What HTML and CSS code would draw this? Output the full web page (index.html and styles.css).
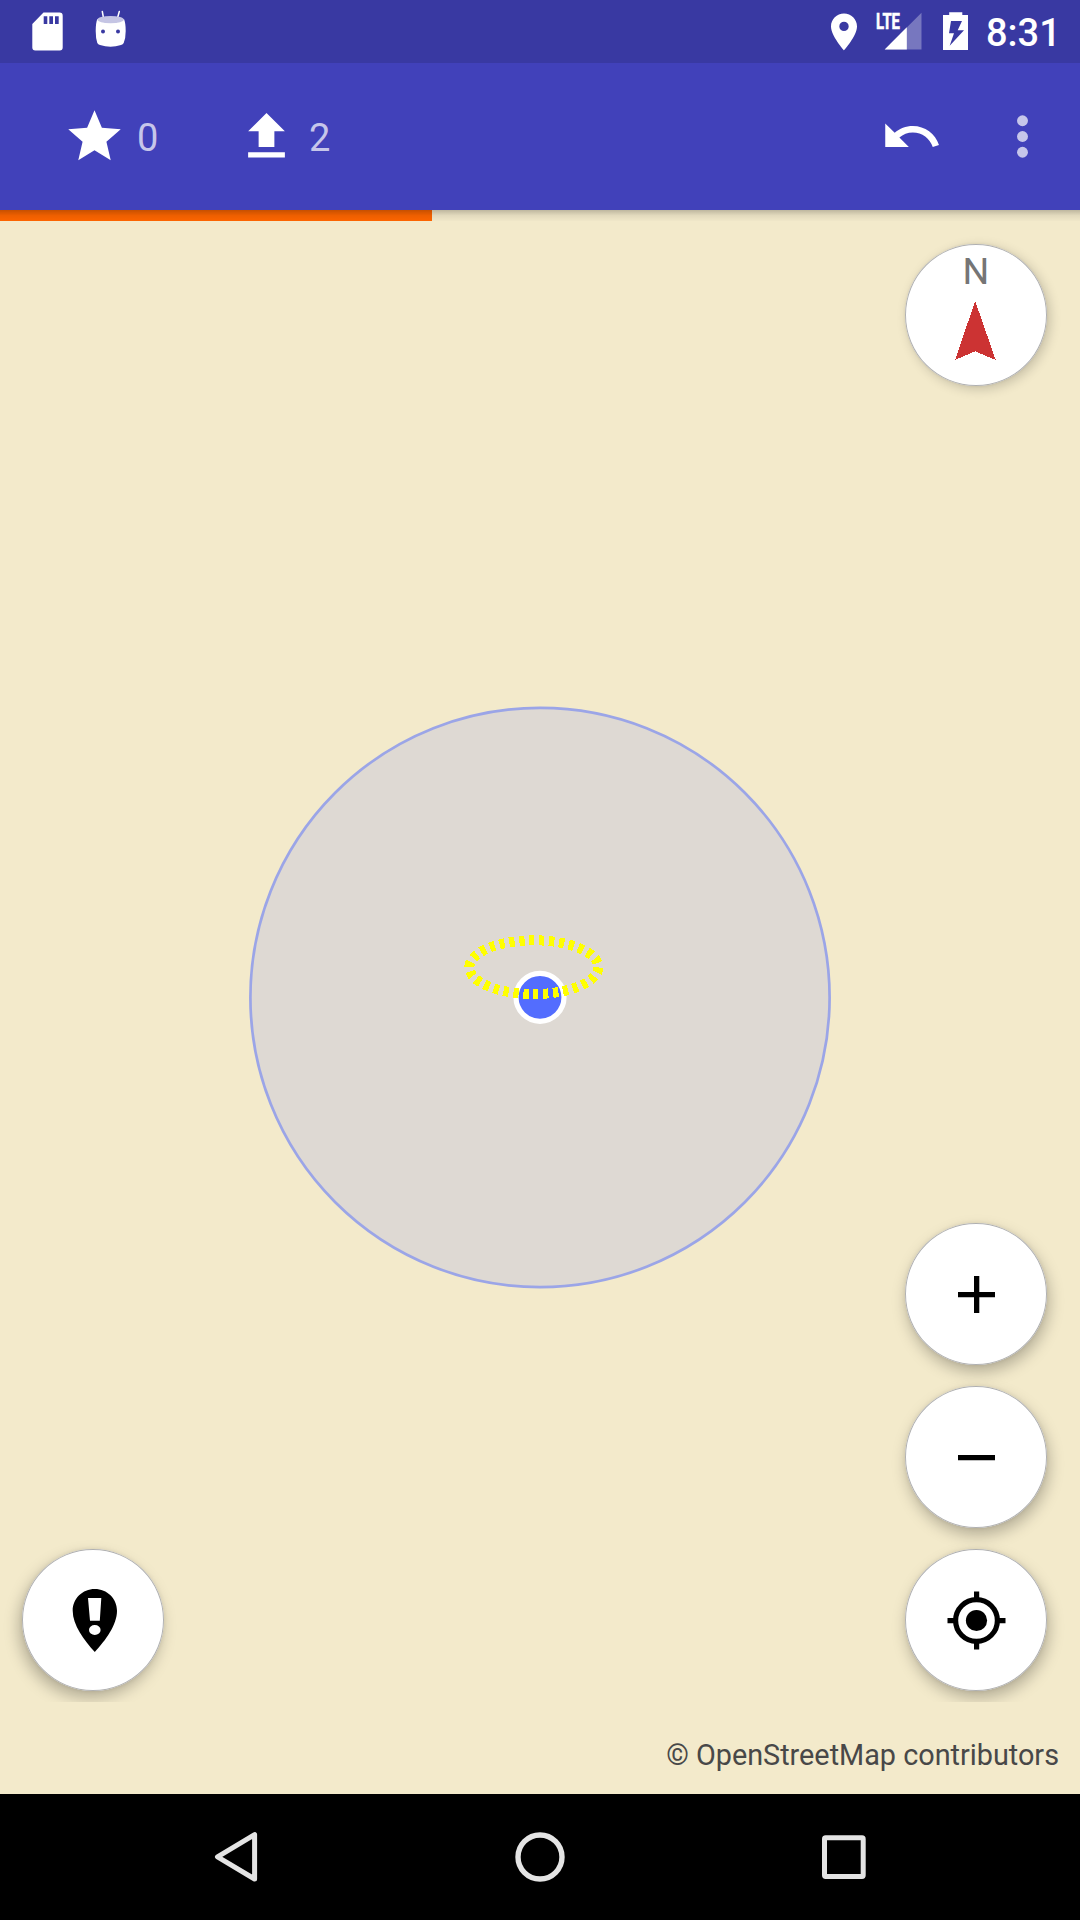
FILE: index.html
```html
<!DOCTYPE html>
<html lang="en">
<head>
<meta charset="utf-8">
<title>Map</title>
<link rel="stylesheet" href="styles.css">
</head>
<body>
<div class="screen">
  <header class="status-bar">
    <svg class="status-icon" width="32" height="63" viewBox="32 0 32 63">
      <path fill="#fff" fill-rule="evenodd" d="M43.500 12.500H59.500Q62.700 12.500 62.700 15.700V47.500Q62.700 50.500 59.700 50.500H35.300Q32.300 50.500 32.300 47.500V24ZM43.700 16.200V24H47.300V16.200ZM49.300 16.200V24H53V16.200ZM55 16.200V24H58.700V16.200Z"/>
    </svg>
    <svg class="status-icon debug-icon" width="32" height="63" viewBox="95 0 32 63">
      <path stroke="#fff" stroke-width="1.500" stroke-linecap="round" d="M102.300 11.500L103.500 18M119.300 11.500L117.500 18"/>
      <path fill="#fff" d="M97.300 19Q95.700 23 95.700 31Q95.700 38 97.300 43Q98 44.500 100 45Q110.500 48.300 121 45Q123 44.500 123.700 43Q125.700 38 125.700 31Q125.700 23 124 19Q110.500 27 97.300 19Z"/>
      <ellipse cx="110.600" cy="19.600" rx="13.300" ry="3.700" fill="#c5c5e4"/>
      <circle cx="103" cy="31.500" r="2" fill="#3939a2"/>
      <circle cx="118" cy="31.500" r="2" fill="#3939a2"/>
    </svg>
    <span class="spacer"></span>
    <svg class="status-icon" width="28" height="63" viewBox="830 0 28 63">
      <path fill="#fff" fill-rule="evenodd" d="M844 13.500C836.800 13.500 831 19.300 831 26.500C831 36 844 50.300 844 50.300S857 36 857 26.500C857 19.300 851.200 13.500 844 13.500ZM844 21.700A4.700 4.700 0 1 1 844 31.100A4.700 4.700 0 1 1 844 21.700Z"/>
    </svg>
    <svg class="status-icon signal-icon" width="48" height="63" viewBox="875 0 48 63">
      <path fill="#7777bf" d="M921.500 12.700V49.500H884.700Z"/>
      <path fill="#fff" d="M906.800 27.300V49.500H884.700Z"/>
      <text class="network-type" x="876" y="29.300" textLength="24" lengthAdjust="spacingAndGlyphs">LTE</text>
    </svg>
    <svg class="status-icon battery-icon" width="26" height="63" viewBox="943 0 26 63">
      <path fill="#fff" fill-rule="evenodd" d="M949.200 12.200H962.300V15H968V50H943V15H949.200ZM951 21L949 33.300H954L949.700 45.700L964 30.200H957.700L962 21Z"/>
    </svg>
    <span class="clock">8:31</span>
  </header>

  <div class="app-bar">
    <svg class="bar-icon" viewBox="0 0 24 24"><path fill="#fff" d="M12 17.270L18.180 21l-1.640-7.030L22 9.240l-7.190-.61L12 2 9.190 8.630 2 9.240l5.460 4.730L5.820 21z"/></svg>
    <span class="counter">0</span>
    <svg class="bar-icon upload-icon" viewBox="0 0 24 24"><path fill="#fff" d="M9 16h6v-6h4l-7-7-7 7h4zM5 18h14v2H5z"/></svg>
    <span class="counter">2</span>
    <span class="spacer"></span>
    <svg class="bar-icon undo-icon" viewBox="0 0 24 24"><path fill="#fff" d="M12.500 8c-2.650 0-5.050.99-6.900 2.600L2 7v9h9l-3.620-3.620c1.390-1.160 3.160-1.880 5.120-1.880 3.540 0 6.550 2.310 7.600 5.500l2.370-.78C21.080 11.030 17.150 8 12.500 8z"/></svg>
    <svg class="bar-icon more-icon" viewBox="0 0 24 24"><g fill="#c6c6ea"><circle cx="12" cy="6" r="2.080"/><circle cx="12" cy="12" r="2.080"/><circle cx="12" cy="18" r="2.080"/></g></svg>
  </div>

  <main class="map">
    <div class="progress"><div class="progress-value" style="width: 40%"></div></div>
    <svg class="map-canvas" width="1080" height="1584" viewBox="0 210 1080 1584">
      <circle cx="540" cy="997.500" r="289.600" fill="#ded9d3" stroke="#9ba5e7" stroke-width="2.700"/>
      <circle cx="540" cy="997.300" r="24" fill="#536dfe" stroke="#fff" stroke-width="5.200"/>
      <ellipse cx="533.800" cy="967.200" rx="64.500" ry="26.900" pathLength="300" fill="none" stroke="#ff0" stroke-width="10" stroke-dasharray="5.300 4.700" stroke-dashoffset="-0.300" shape-rendering="crispEdges"/>
    </svg>
    <div class="controls">
      <div class="round-button compass">
        <span class="north">N</span>
        <svg class="needle" width="42" height="60" viewBox="955 301 42 60"><path fill="#c33" shape-rendering="crispEdges" d="M975.200 301L995.700 360L975.200 351.300L955 360Z"/></svg>
      </div>
      <div class="lower">
        <div class="round-button create">
          <svg width="142" height="142" viewBox="22 1549 142 142"><path fill-rule="evenodd" d="M94.800 1589C82.500 1589 72.700 1598.500 72.700 1610.800C72.700 1625 84 1640.500 94.800 1651.900C105.600 1640.500 117 1625 117 1610.800C117 1598.500 107.100 1589 94.800 1589ZM88 1598H101.300L99.800 1620.700H90ZM94.800 1625A5.800 5 0 1 1 94.800 1635A5.800 5 0 1 1 94.800 1625Z"/></svg>
        </div>
        <div class="zoom-stack">
          <div class="round-button"><svg width="142" height="142" viewBox="905 1223 142 142"><path d="M958 1292H974V1276H979.300V1292H995V1297.300H979.300V1313H974V1297.300H958Z"/></svg></div>
          <div class="round-button"><svg width="142" height="142" viewBox="905 1386 142 142"><path d="M958 1455H995V1460.300H958Z"/></svg></div>
          <div class="round-button"><svg width="142" height="142" viewBox="905 1549 142 142"><circle cx="976.500" cy="1620.500" r="10.600"/><circle cx="976.500" cy="1620.500" r="20.900" fill="none" stroke="#000" stroke-width="5.200"/><path d="M974 1591.500H979.200V1598H974ZM974 1643H979.200V1649.500H974ZM947.500 1618H954V1623.200H947.500ZM999 1618H1005.500V1623.200H999Z"/></svg></div>
        </div>
      </div>
    </div>
    <div class="attribution">© OpenStreetMap contributors</div>
  </main>

  <nav class="nav-bar">
    <svg width="64" height="126" viewBox="204 1794 64 126"><path d="M254.600 1834.600V1879L217.500 1856.800Z" fill="none" stroke="#e4e4e4" stroke-width="5" stroke-linejoin="round"/></svg>
    <svg width="64" height="126" viewBox="508 1794 64 126"><circle cx="540" cy="1857" r="22" fill="none" stroke="#e4e4e4" stroke-width="5.400"/></svg>
    <svg width="64" height="126" viewBox="812 1794 64 126"><rect x="824.500" y="1837.700" width="38.700" height="38.700" rx="1.200" fill="none" stroke="#e4e4e4" stroke-width="5"/></svg>
  </nav>
</div>
</body>
</html>
```
FILE: styles.css
```css
* { box-sizing: border-box; }

body {
  margin: 0;
  font-family: Roboto, "Liberation Sans", sans-serif;
}

svg { display: block; flex: none; }

.screen {
  display: flex;
  flex-direction: column;
  width: 1080px;
  height: 1920px;
  overflow: hidden;
}

.spacer { flex: 1; }

.status-bar {
  display: flex;
  flex: none;
  height: 63px;
  padding: 0 26px 0 32px;
  background: #3939a2;
}

.debug-icon { margin-left: 31px; }
.signal-icon { margin-left: 17px; }
.battery-icon { margin-left: 20px; }

.network-type {
  fill: #fff;
  stroke: #fff;
  stroke-width: .6px;
  font-size: 22px;
  font-weight: 700;
}

.clock {
  width: 68px;
  margin-left: 17px;
  color: #fff;
  font-size: 38px;
  font-weight: 500;
  line-height: 67px;
  white-space: nowrap;
}

.app-bar {
  display: flex;
  flex: none;
  align-items: center;
  height: 147px;
  padding: 0 26px 0 63px;
  background: #4141ba;
}

.bar-icon { width: 63px; height: 63px; }
.upload-icon { margin-left: 76px; }
.undo-icon { margin-right: 48px; }

.counter {
  width: 22px;
  margin-left: 11px;
  padding-top: 3px;
  color: #c6c6ea;
  font-size: 38px;
  line-height: 44px;
}

.map {
  position: relative;
  flex: none;
  height: 1584px;
  background: #f3eacb;
}

.progress {
  position: absolute;
  z-index: 1;
  top: 0;
  left: 0;
  width: 100%;
  height: 11px;
}

.progress::after {
  content: "";
  position: absolute;
  inset: 0;
  background: linear-gradient(rgba(0, 0, 0, .22), rgba(0, 0, 0, .07) 50%, rgba(0, 0, 0, .01));
}

.progress-value { height: 100%; background: #ff6600; }

.map-canvas { position: absolute; top: 0; left: 0; }

.controls {
  position: absolute;
  top: 0;
  left: 0;
  display: flex;
  flex-direction: column;
  justify-content: space-between;
  width: 100%;
  height: 1492px;
  padding: 34px 33px 11px 22px;
  overflow: hidden;
}

.round-button {
  position: relative;
  width: 142px;
  height: 142px;
  border-radius: 50%;
  background: #fff;
  box-shadow: inset 0 0 0 1px #b0b0b0, 2px 7px 15px rgba(0, 0, 0, .26), 0 0 4px rgba(0, 0, 0, .08);
}

.create { box-shadow: inset 0 0 0 1px #b0b0b0, -3px 7px 15px rgba(0, 0, 0, .26), 0 0 4px rgba(0, 0, 0, .08); }

.compass {
  display: flex;
  flex-direction: column;
  align-items: center;
  align-self: flex-end;
  padding-top: 5px;
  box-shadow: inset 0 0 0 1px #b0b0b0, 3px 3px 12px rgba(0, 0, 0, .19), 0 0 3px rgba(0, 0, 0, .08);
}

.north {
  color: #757575;
  font-size: 37.500px;
  line-height: 44px;
}

.needle { margin-top: 8px; }

.lower {
  display: flex;
  align-items: flex-end;
  justify-content: space-between;
}

.zoom-stack {
  display: flex;
  flex-direction: column;
  gap: 21px;
}

.attribution {
  position: absolute;
  right: 21px;
  bottom: 22px;
  color: #484848;
  font-size: 28.800px;
  line-height: 34px;
  white-space: nowrap;
}

.nav-bar {
  display: flex;
  flex: none;
  gap: 240px;
  height: 126px;
  padding-left: 204px;
  background: #000;
}
```
